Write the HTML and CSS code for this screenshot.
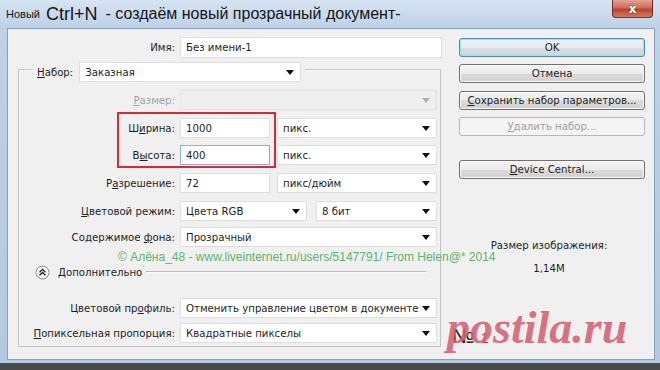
FILE: index.html
```html
<!DOCTYPE html>
<html>
  <head>
    <meta charset="utf-8">
    <link rel="stylesheet" href="styles.css">
  </head>
  <body>
    <div class="window">
      <div class="titlebar">
        <span class="t-small">Новый</span>
        <span class="t-key">Ctrl+N</span>
        <span class="t-text">- создаём новый прозрачный документ-</span>
        <div class="close">x</div>
      </div>

      <div class="client">
        <div class="form">
          <div class="row name-row">
            <span class="lbl">Имя:</span>
            <div class="field name-field">Без имени-1</div>
          </div>

          <div class="group">
            <div class="group-head">
              <span class="head-lbl"><u>Н</u>абор:</span>
              <div class="field select head-select">Заказная<span class="arr"></span></div>
            </div>

            <div class="row">
              <span class="lbl disabled-lbl"><u>Р</u>азмер:</span>
              <div class="field select full disabled-field"><span class="arr"></span></div>
            </div>
            <div class="row">
              <span class="lbl">Ш<u>и</u>рина:</span>
              <div class="field num">1000</div>
              <div class="field select unit">пикс.<span class="arr"></span></div>
            </div>
            <div class="row row-tight">
              <span class="lbl">В<u>ы</u>сота:</span>
              <div class="field num focused">400</div>
              <div class="field select unit">пикс.<span class="arr"></span></div>
            </div>
            <div class="row">
              <span class="lbl">Р<u>а</u>зрешение:</span>
              <div class="field num">72</div>
              <div class="field select unit">пикс/дюйм<span class="arr"></span></div>
            </div>
            <div class="row">
              <span class="lbl"><u>Ц</u>ветовой режим:</span>
              <div class="field select mode">Цвета RGB<span class="arr"></span></div>
              <div class="field select bits">8 бит<span class="arr"></span></div>
            </div>
            <div class="row row-close">
              <span class="lbl">Содержимое <u>ф</u>она:</span>
              <div class="field select full">Прозрачный<span class="arr"></span></div>
            </div>

            <div class="advanced">
              <svg class="adv-icon" width="15" height="15" viewBox="0 0 15 15">
                <circle cx="7.5" cy="7.5" r="6.5" fill="#f7f7f7" stroke="#8c8c8c"/>
                <polyline points="4.6,7.2 7.5,4.4 10.4,7.2" fill="none" stroke="#222" stroke-width="1.3"/>
                <polyline points="4.6,10.3 7.5,7.5 10.4,10.3" fill="none" stroke="#222" stroke-width="1.3"/>
              </svg>
              <span class="adv-text">Дополнительно</span>
              <span class="adv-line"></span>
            </div>

            <div class="row row-profile">
              <span class="lbl">Цветовой пр<u>о</u>филь:</span>
              <div class="field select full">Отменить управление цветом в документе<span class="arr"></span></div>
            </div>
            <div class="row row-pixel">
              <span class="lbl"><u>П</u>опиксельная пропорция:</span>
              <div class="field select full">Квадратные пикселы<span class="arr"></span></div>
            </div>
          </div>
        </div>

        <div class="side">
          <div class="btn default">OK</div>
          <div class="btn gap7">Отмена</div>
          <div class="btn gap8"><u>С</u>охранить набор параметров...</div>
          <div class="btn gap7 disabled"><u>У</u>далить набор...</div>
          <div class="btn device"><u>D</u>evice Central...</div>
          <div class="imgsize">Размер изображения:</div>
          <div class="imgsize-val">1,14M</div>
        </div>

        <div class="mark-box"></div>
        <div class="mark-green">© Алёна_48 - www.liveinternet.ru/users/5147791/ From Helen@* 2014</div>
        <div class="mark-num">№<span>1</span></div>
        <div class="mark-postila">postila.ru</div>
      </div>
    </div>
  </body>
</html>
```

FILE: styles.css
```css
body {
    margin: 0;
    width: 660px;
    height: 370px;
    overflow: hidden;
    background: #4a4a4a;
    font-family: "DejaVu Sans Condensed", "DejaVu Sans", sans-serif;
    font-size: 11.3px;
    color: #1e1e1e;
}

.window {
    height: 363px;
    display: flex;
    flex-direction: column;
    background: linear-gradient(#d6e4f2, #bdd1e7 28px, #b3c9e1);
}

/* title bar */
.titlebar {
    position: relative;
    height: 28px;
    display: flex;
    align-items: center;
    padding-left: 6px;
    font-family: "Liberation Sans", Arial, sans-serif;
    color: #151515;
}

.t-small {
    font-size: 11px;
}

.t-key {
    font-size: 18px;
    margin-left: 6px;
}

.t-text {
    font-size: 16px;
    margin-left: 8px;
}

.close {
    position: absolute;
    top: 0;
    right: 7px;
    width: 41px;
    height: 18px;
    box-sizing: border-box;
    border: 1px solid #7a2a2a;
    border-top: none;
    border-radius: 0 0 4px 4px;
    background: linear-gradient(#e3a193, #cf6e5d 45%, #b9432f 55%, #d27a62);
    color: #fff;
    font: bold 12px "DejaVu Sans", sans-serif;
    display: flex;
    align-items: center;
    justify-content: center;
    text-shadow: 0 0 2px #5a1a10;
}

/* client area */
.client {
    position: relative;
    height: 332px;
    box-sizing: border-box;
    margin: 0 5px 0 7px;
    border: 1px solid #8a9fb8;
    background: #f0f0f0;
    display: flex;
}

.form {
    width: 424px;
    margin-left: 10px;
    padding-top: 8px;
}

.row {
    display: flex;
    align-items: center;
    margin-top: 8px;
}

.row-tight { margin-top: 7px; }
.row-close { margin-top: 6px; }
.row-profile { margin-top: 18px; }
.row-pixel { margin-top: 5px; }

.name-row {
    margin-top: 0;
}

.lbl {
    flex: none;
    width: 156px;
    margin-right: 5px;
    text-align: right;
}

.name-row .lbl {
    width: 157px;
}

.disabled-lbl {
    color: #a3a3a3;
}

.field {
    height: 20px;
    box-sizing: border-box;
    display: flex;
    align-items: center;
    padding-left: 5px;
    background: #fff;
    border: 1px solid #dedede;
    white-space: nowrap;
}

.name-field {
    width: 263px;
    height: 21px;
}

.arr {
    flex: none;
    margin-left: auto;
    margin-right: 6px;
    width: 0;
    height: 0;
    border-left: 4px solid transparent;
    border-right: 4px solid transparent;
    border-top: 5px solid #111;
}

.full { width: 257px; }
.num { width: 90px; }
.unit { width: 160px; margin-left: 7px; }
.mode { width: 127px; }
.bits { width: 121px; margin-left: 9px; }

.focused {
    border-color: #8fb0d4;
}

.disabled-field {
    background: #efefef;
    border-color: #e2e2e2;
}

.disabled-field .arr {
    border-top-color: #b0b0b0;
}

/* group box */
.group {
    width: 423px;
    box-sizing: border-box;
    margin-top: 11px;
    border: 1px solid #c4c4c4;
    box-shadow: inset 1px 1px #fbfbfb;
    padding-bottom: 3px;
}

.group-head {
    display: flex;
    align-items: center;
    width: fit-content;
    margin: -8px 0 0 14px;
    padding: 0 4px;
    background: #f0f0f0;
}

.head-lbl {
    margin-right: 6px;
}

.head-select {
    width: 222px;
}

.advanced {
    display: flex;
    align-items: center;
    height: 16px;
    margin-top: 17px;
    padding-left: 16px;
}

.adv-text {
    margin-left: 8px;
}

.adv-line {
    flex: 1;
    height: 0;
    border-top: 1px solid #bdbdbd;
    border-bottom: 1px solid #fbfbfb;
    margin: 0 14px 0 4px;
}

/* buttons */
.side {
    width: 186px;
    margin-left: 17px;
    padding-top: 9px;
    display: flex;
    flex-direction: column;
}

.btn {
    height: 19px;
    box-sizing: border-box;
    border: 1px solid #707070;
    border-radius: 3px;
    background: linear-gradient(#f3f3f3, #ebebeb 50%, #dcdcdc 50%, #d0d0d0);
    box-shadow: inset 0 0 0 1px #fbfbfb;
    display: flex;
    align-items: center;
    justify-content: center;
}

.btn.default {
    border-color: #4b8cb8;
    box-shadow: inset 0 0 0 1px #9ddcf5;
    background: linear-gradient(#eef4f7, #e4ecf0 50%, #d5dfe4 50%, #ccd7dc);
}

.gap7 { margin-top: 7px; }
.gap8 { margin-top: 8px; }

.btn.disabled {
    border-color: #b5b9bc;
    background: #f4f4f4;
    box-shadow: none;
    color: #a0a0a0;
}

.btn.device {
    margin-top: 24px;
}

.imgsize {
    margin-top: 60px;
    padding-right: 6px;
    text-align: center;
    line-height: 14px;
}

.imgsize-val {
    margin-top: 9px;
    padding-right: 6px;
    text-align: center;
    line-height: 14px;
}

/* overlays drawn over the dialog */
.mark-box {
    position: absolute;
    left: 109px;
    top: 83px;
    width: 159px;
    height: 56px;
    box-sizing: border-box;
    border: 2px solid #d42a3a;
}

.mark-green {
    position: absolute;
    left: 110px;
    top: 221px;
    font: 12px/14px "Liberation Sans", Arial, sans-serif;
    color: #5cb46e;
    white-space: nowrap;
}

.mark-num {
    position: absolute;
    left: 444px;
    top: 296px;
    font: 21px/21px "Liberation Sans", Arial, sans-serif;
    color: #222;
}

.mark-num span {
    font-size: 15px;
    margin-left: 6px;
    color: #c0404c;
}

.mark-postila {
    position: absolute;
    left: 439px;
    top: 276px;
    font: italic bold 46px/46px "Liberation Serif", serif;
    color: rgba(214, 96, 112, 0.88);
    white-space: nowrap;
}
```
